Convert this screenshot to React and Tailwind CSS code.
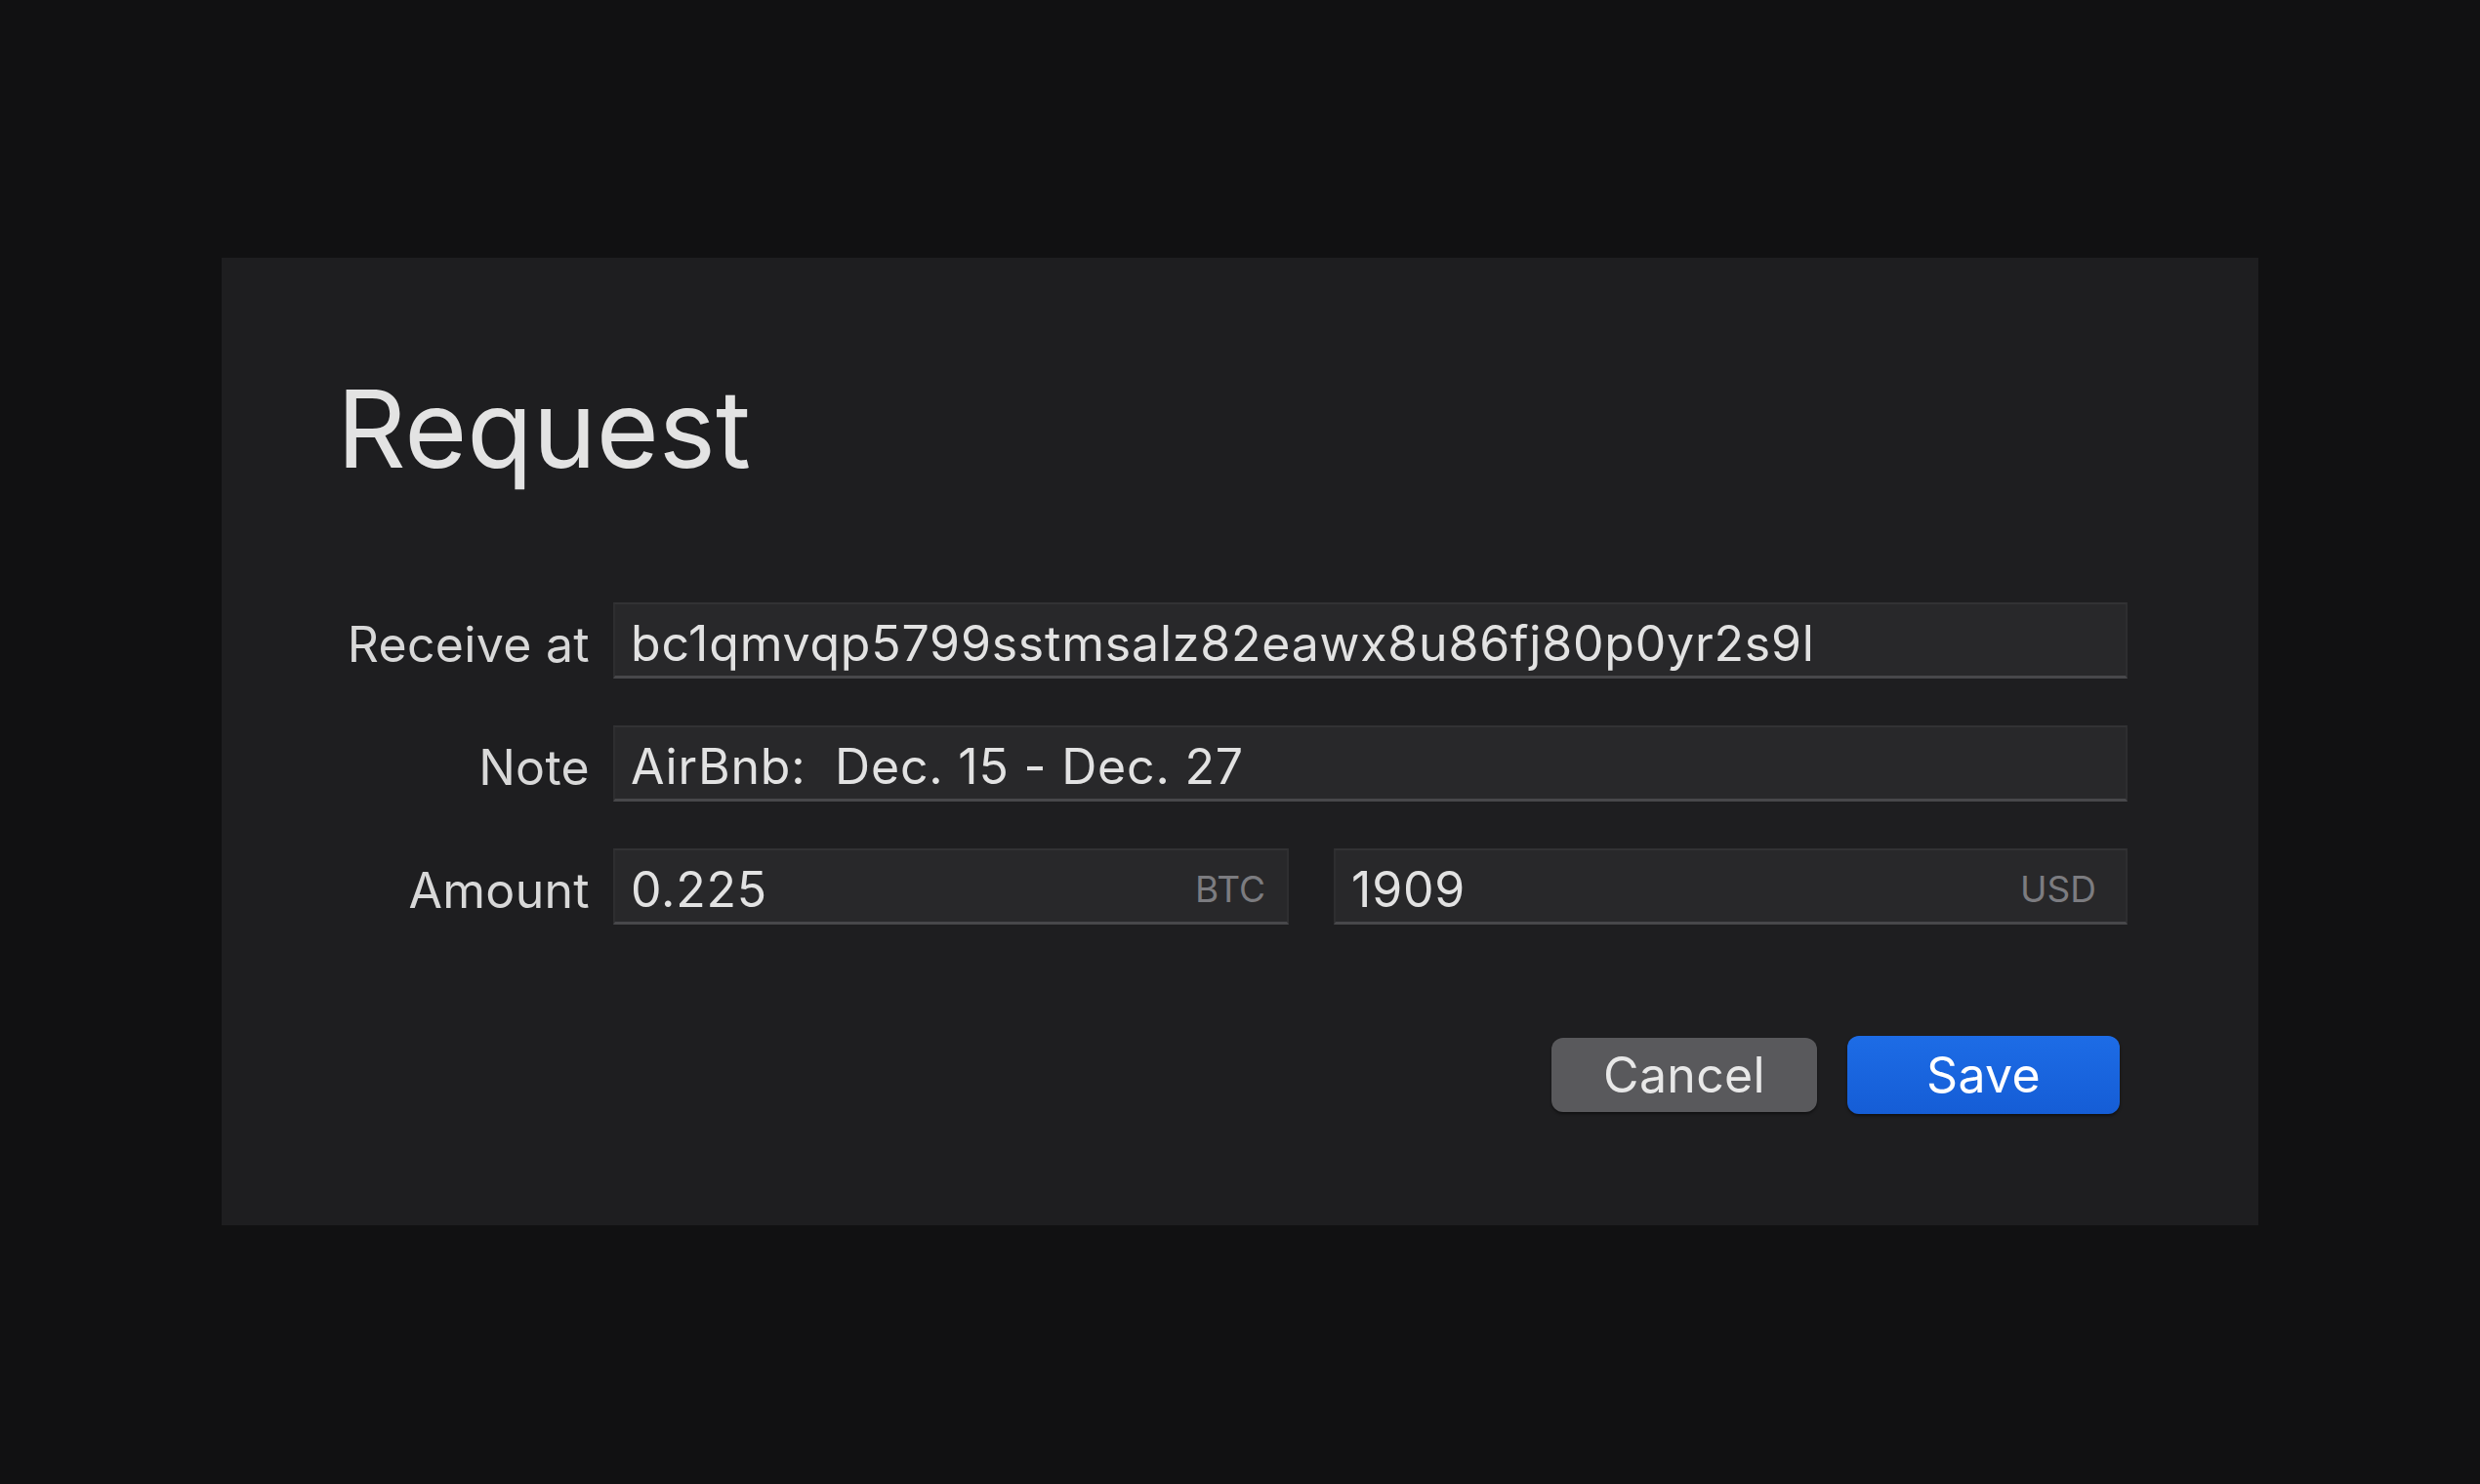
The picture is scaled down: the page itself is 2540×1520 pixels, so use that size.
import React from 'react';

const font = { fontFamily: 'Inter, "Noto Sans", sans-serif' };

const Field = ({ value, unit, className = '', unitPad = 'pr-[22px]' }) => (
  <div
    className={`h-[78px] flex items-center justify-between bg-[#28282a] border-x-2 border-t-2 border-b-[3px] border-x-[#2e2e30] border-t-[#323234] border-b-[#48484b] pl-[16px] ${unitPad} ${className}`}
  >
    <span className="text-[50px] leading-none text-[#e2e2e2] tracking-[0.8px] whitespace-pre pt-[6px]">{value}</span>
    {unit && <span className="text-[37px] leading-none text-[#7c7c80] pt-[6px]">{unit}</span>}
  </div>
);

const Label = ({ children }) => (
  <div className="h-[78px] flex items-center justify-end text-[50px] leading-none text-[#d8d8d8] tracking-[0.3px] pt-[8px]">
    {children}
  </div>
);

export default function App() {
  return (
    <div className="min-h-screen bg-[#111112] pt-[264px] pl-[227px]" style={font}>
      <div className="w-[2086px] h-[991px] bg-[#1e1e20] pl-[118px] pr-[134px] pt-[120px]">
        <h1 className="text-[110px] leading-none text-[#e3e3e3] font-normal">Request</h1>

        <div className="mt-[123px] grid grid-cols-[259px_1fr] gap-x-[24px] gap-y-[48px]">
          <Label>Receive at</Label>
          <Field value="bc1qmvqp5799sstmsalz82eawx8u86fj80p0yr2s9l" />

          <Label>Note</Label>
          <Field value="AirBnb:  Dec. 15 - Dec. 27" />

          <Label>Amount</Label>
          <div className="flex gap-[46px]">
            <Field value="0.225" unit="BTC" className="w-[692px]" />
            <Field value="1909" unit="USD" unitPad="pr-[30px]" className="flex-1" />
          </div>
        </div>

        <div className="mt-[114px] flex justify-end gap-[31px] pr-[8px] items-center">
          <button className="w-[272px] h-[76px] rounded-[12px] bg-[#59595c] text-[50px] leading-none text-[#e8e8e8] tracking-[0.3px] shadow-[0_2px_3px_rgba(0,0,0,0.45)]">
            Cancel
          </button>
          <button className="w-[279px] h-[80px] rounded-[12px] bg-gradient-to-b from-[#1d6ce6] to-[#155dd6] text-[50px] leading-none text-white tracking-[0.3px] shadow-[0_2px_3px_rgba(0,0,0,0.45)]">
            Save
          </button>
        </div>
      </div>
    </div>
  );
}
